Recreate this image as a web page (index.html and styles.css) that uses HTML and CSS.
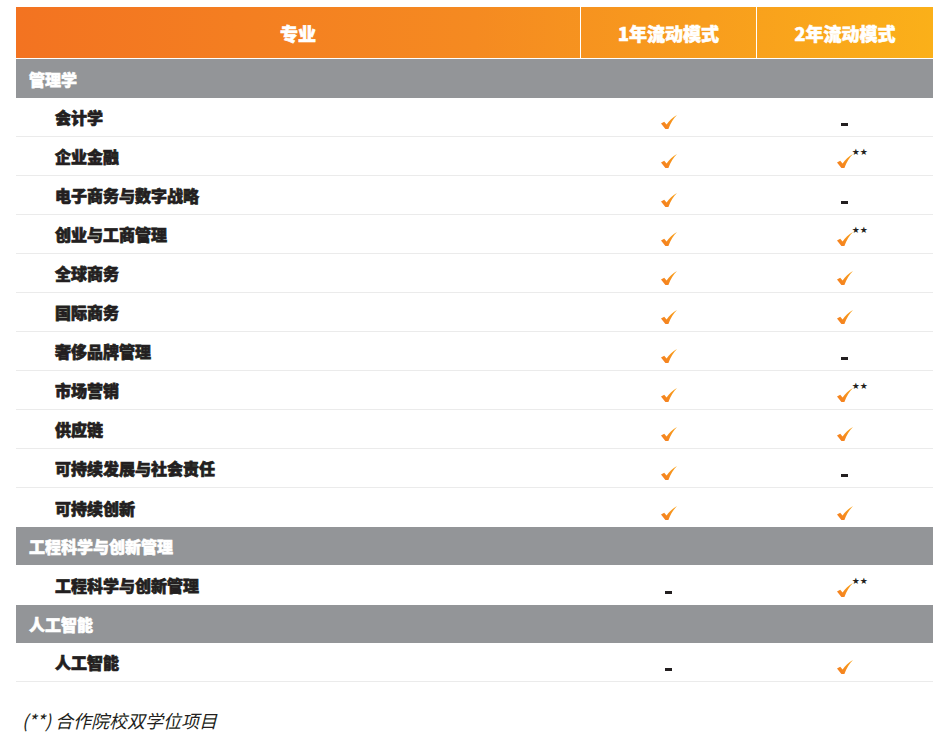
FILE: index.html
```html
<!DOCTYPE html>
<html lang="zh">
<head>
<meta charset="utf-8">
<title>专业</title>
<link rel="stylesheet" href="styles.css">
</head>
<body>
<svg width="0" height="0" class="defs">
  <defs>
    <linearGradient id="chk" x1="0" y1="1" x2="1" y2="0">
      <stop offset="0" stop-color="#f47b20"/>
      <stop offset="1" stop-color="#f9a51c"/>
    </linearGradient>
    <symbol id="check" viewBox="0 0 16 14">
      <path d="M0 8.6 L3.2 6.8 L5.6 9.4 C8.4 5.6 11.4 2.6 16 0 C12.6 3.6 9.6 8 7.4 14 L4.4 14 Z" fill="url(#chk)"/>
    </symbol>
  </defs>
</svg>
<div class="wrap">
  <table class="grid">
    <thead>
      <tr class="head">
        <th class="c1">专业</th>
        <th class="c2">1年流动模式</th>
        <th class="c3">2年流动模式</th>
      </tr>
    </thead>
    <tbody>
      <tr class="group first"><td colspan="3">管理学</td></tr>
      <tr><td class="name">会计学</td><td><span class="ck"><svg><use href="#check"/></svg></span></td><td><span class="dash"></span></td></tr>
      <tr><td class="name">企业金融</td><td><span class="ck"><svg><use href="#check"/></svg></span></td><td><span class="ck"><svg><use href="#check"/></svg><span class="stars">★★</span></span></td></tr>
      <tr><td class="name">电子商务与数字战略</td><td><span class="ck"><svg><use href="#check"/></svg></span></td><td><span class="dash"></span></td></tr>
      <tr><td class="name">创业与工商管理</td><td><span class="ck"><svg><use href="#check"/></svg></span></td><td><span class="ck"><svg><use href="#check"/></svg><span class="stars">★★</span></span></td></tr>
      <tr><td class="name">全球商务</td><td><span class="ck"><svg><use href="#check"/></svg></span></td><td><span class="ck"><svg><use href="#check"/></svg></span></td></tr>
      <tr><td class="name">国际商务</td><td><span class="ck"><svg><use href="#check"/></svg></span></td><td><span class="ck"><svg><use href="#check"/></svg></span></td></tr>
      <tr><td class="name">奢侈品牌管理</td><td><span class="ck"><svg><use href="#check"/></svg></span></td><td><span class="dash"></span></td></tr>
      <tr><td class="name">市场营销</td><td><span class="ck"><svg><use href="#check"/></svg></span></td><td><span class="ck"><svg><use href="#check"/></svg><span class="stars">★★</span></span></td></tr>
      <tr><td class="name">供应链</td><td><span class="ck"><svg><use href="#check"/></svg></span></td><td><span class="ck"><svg><use href="#check"/></svg></span></td></tr>
      <tr><td class="name">可持续发展与社会责任</td><td><span class="ck"><svg><use href="#check"/></svg></span></td><td><span class="dash"></span></td></tr>
      <tr class="last"><td class="name">可持续创新</td><td><span class="ck"><svg><use href="#check"/></svg></span></td><td><span class="ck"><svg><use href="#check"/></svg></span></td></tr>
      <tr class="group"><td colspan="3">工程科学与创新管理</td></tr>
      <tr class="last tall"><td class="name">工程科学与创新管理</td><td><span class="dash"></span></td><td><span class="ck"><svg><use href="#check"/></svg><span class="stars">★★</span></span></td></tr>
      <tr class="group"><td colspan="3">人工智能</td></tr>
      <tr class="end"><td class="name">人工智能</td><td><span class="dash"></span></td><td><span class="ck"><svg><use href="#check"/></svg></span></td></tr>
    </tbody>
  </table>
  <p class="note">(**) 合作院校双学位项目</p>
</div>
</body>
</html>
```
FILE: styles.css
```css
html, body {
  margin: 0;
  padding: 0;
  background: #ffffff;
}
body {
  font-family: "Noto Sans CJK SC", "Noto Sans", sans-serif;
  color: #231f20;
}
.defs {
  position: absolute;
  width: 0;
  height: 0;
  overflow: hidden;
}
.wrap {
  padding: 7px 21px 0 16px;
}
.grid {
  width: 915px;
  border-collapse: collapse;
  table-layout: fixed;
}
.grid .c1 { width: 564px; }
.grid .c2 { width: 175px; }
.grid .c3 { width: 176px; }
.head th {
  height: 51px;
  padding: 0;
  color: #ffffff;
  font-size: 18px;
  font-weight: 900;
  -webkit-text-stroke: 0.6px #ffffff;
  text-align: center;
  border-bottom: 1px solid #ffffff;
}
.head {
  background: linear-gradient(to right, #f37321 0%, #f58a21 50%, #fbb019 100%);
}
.head .c2, .head .c3 {
  border-left: 1px solid #ffffff;
}
.group td {
  background: #939598;
  color: #ffffff;
  font-size: 16px;
  font-weight: 900;
  -webkit-text-stroke: 0.6px #ffffff;
  height: 38px;
  padding: 0 0 0 13px;
  text-align: left;
}
.group.first td {
  height: 39px;
}
tbody tr td {
  height: 38px;
  padding: 0;
  text-align: center;
  border-bottom: 1px solid #ebebeb;
}
tbody tr.group td {
  border-bottom: none;
}
tbody tr.last td {
  border-bottom: none;
  height: 39px;
}
tbody tr.last.tall td {
  height: 40px;
}
tbody td.name {
  text-align: left;
  padding-left: 39px;
  font-size: 16px;
  font-weight: 900;
  -webkit-text-stroke: 0.7px #231f20;
  color: #231f20;
}
.ck {
  position: relative;
  display: inline-block;
  width: 16px;
  height: 14px;
  top: 5px;
}
.ck svg {
  display: block;
  width: 16px;
  height: 14px;
}
.stars {
  position: absolute;
  left: 15px;
  top: -6px;
  font-size: 9px;
  line-height: 9px;
  color: #231f20;
  letter-spacing: 0;
  font-family: "DejaVu Sans", sans-serif;
  white-space: nowrap;
}
.dash {
  display: inline-block;
  width: 7px;
  height: 3px;
  background: #231f20;
  position: relative;
  top: 2px;
}
.note {
  margin: 25px 0 0 6px;
  font-size: 18px;
  font-style: italic;
  color: #231f20;
  font-family: "Noto Sans CJK SC", "Noto Sans", sans-serif;
}
```
